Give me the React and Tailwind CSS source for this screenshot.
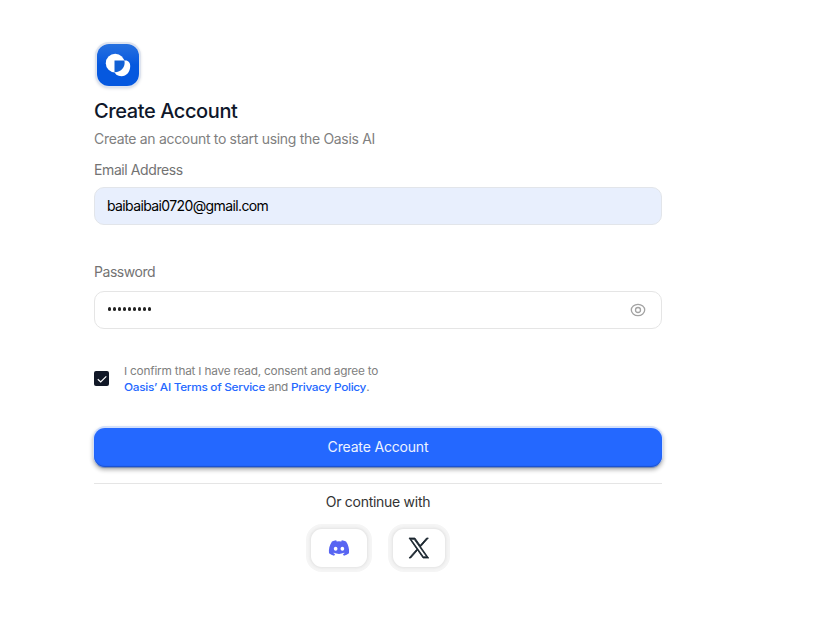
import React from 'react';
import { FaDiscord } from 'react-icons/fa6';

function Logo() {
  return (
    <div className="ml-[3px] flex h-[42px] w-[42px] items-center justify-center rounded-[12px] bg-gradient-to-b from-[#2670df] via-[#0558df] to-[#0558df] shadow-[0_0_0_2px_#dde3ef,0_1px_3px_2px_#dfe2e8]">
      <svg width="26" height="26" viewBox="0 0 26 26" className="block">
        <circle cx="10.2" cy="11.2" r="9.4" fill="#fff" />
        <path d="M10 8.4H20.5C23.5 8.4 25.4 10.8 25.2 14.5C25 20 21.5 24.2 16.5 24.2C12.5 24.2 9.4 22 9.2 18.5Z" fill="#fff" />
        <path d="M9.5 20.3V8.6H19.4C20.8 15.2 16 20.4 9.5 20.3Z" fill="#1260d4" />
      </svg>
    </div>
  );
}

function EyeIcon() {
  return (
    <svg width="16" height="16" viewBox="0 0 16 16" fill="none" stroke="#a3a3a3" strokeWidth="1.3">
      <path d="M1.3 8C1.3 5.1 4.3 2.3 8 2.3S14.7 5.1 14.7 8S11.7 13.7 8 13.7S1.3 10.9 1.3 8Z" />
      <circle cx="8" cy="8" r="2.5" />
    </svg>
  );
}

export default function App() {
  return (
    <main className="h-[623px] w-[828px] overflow-hidden bg-white pl-[94px] pt-[44px] font-['Inter',sans-serif]">
      <div className="flex w-[568px] flex-col">
        <Logo />
        <h1 className="mt-[11px] h-7 whitespace-nowrap text-[20px] font-medium leading-7 tracking-[-0.4px] text-[#0f172a]">Create Account</h1>
        <p className="mt-[4px] h-5 whitespace-nowrap text-[14px] leading-5 tracking-[-0.31px] text-[#808080]">Create an account to start using the Oasis AI</p>
        <label className="mt-[11px] h-5 text-[14px] leading-5 tracking-[-0.4px] text-[#737373]">Email Address</label>
        <div className="mt-[7px] flex h-[38px] items-center rounded-[10px] border border-[#e2e5ea] bg-[#e8effd] px-3 pb-[2px] text-[14px] tracking-[-0.62px] text-black">
          baibaibai0720@gmail.com
        </div>
        <label className="mt-[37px] h-5 text-[14px] leading-5 tracking-[-0.45px] text-[#737373]">Password</label>
        <div className="mt-[9px] flex h-[38px] items-center justify-between rounded-[10px] border border-[#e5e5e5] pl-[13px] pr-[15px]">
          <div className="flex gap-[2px] pb-[2px]">
            {Array.from({ length: 9 }, (_, i) => (
              <span key={i} className="h-[4px] w-[3px] rounded-full bg-[#222]" />
            ))}
          </div>
          <EyeIcon />
        </div>
        <div className="mt-[34px] flex h-8 items-center">
          <span className="mb-px flex h-[15px] w-[15px] items-center justify-center rounded-[2px] bg-[#111827]">
            <svg width="12" height="12" viewBox="0 0 12 12" fill="none" stroke="#fff" strokeWidth="1.2">
              <path d="M1.8 6.3L4.7 9L10.3 3.3" />
            </svg>
          </span>
          <p className="ml-[15px] origin-left scale-x-[1.075] whitespace-nowrap text-[11px] leading-4 text-[#808080]">
            <span className="tracking-[-0.2px]">I confirm that I have read, consent and agree to</span>
            <br />
            <span className="tracking-[-0.28px]">
              <a className="font-medium text-[#2468ff]">Oasis’ AI Terms of Service</a> and <a className="font-medium text-[#2468ff]">Privacy Policy</a>.
            </span>
          </p>
        </div>
        <button className="mt-[33px] flex h-[39px] items-center justify-center rounded-[11px] bg-[#2468ff] pb-[2px] text-[14px] tracking-[-0.17px] text-[#eef3ff] shadow-[0_-1px_0_1px_#d3e0fb,0_1px_1px_0_#7085b0,0_2px_4px_1px_rgba(0,0,0,0.3),inset_0_-1px_1px_#1c50cb]">
          Create Account
        </button>
        <hr className="mt-4 border-t border-[#e5e5e5]" />
        <p className="mt-[8px] h-5 text-center text-[14px] leading-5 tracking-[-0.28px] text-[#333]">Or continue with</p>
        <div className="mt-[17px] flex justify-center gap-[26px]">
          <button className="flex h-[38px] w-[56px] items-center justify-center rounded-[11px] bg-white shadow-[0_0_0_1px_#e9e9e9,0_0_2px_2px_#ececec,0_0_0_5px_#f5f5f5]">
            <FaDiscord size={22} color="#5865f2" />
          </button>
          <button className="flex h-[38px] w-[52px] items-center justify-center rounded-[11px] bg-white shadow-[0_0_0_1px_#e9e9e9,0_0_2px_2px_#ececec,0_0_0_5px_#f5f5f5]">
            <svg width="20" height="20" viewBox="0 0 300 300" fill="#1c2730" stroke="#1c2730" strokeWidth="12" className="overflow-visible">
              <path d="M178.57 127.15L290.27 0H263.81L166.78 110.38L89.34 0H0L117.13 166.93L0 300.25H26.46L128.86 183.66L210.66 300.25H300M36.01 19.54H76.66L263.79 281.67H223.13" />
            </svg>
          </button>
        </div>
      </div>
    </main>
  );
}
